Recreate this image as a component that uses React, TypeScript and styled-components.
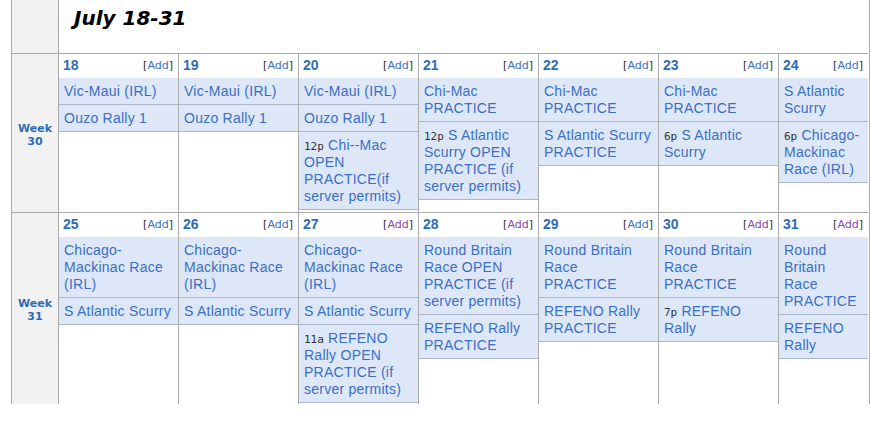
import { Fragment } from 'react';
import styled, { createGlobalStyle } from 'styled-components';

const GlobalStyle = createGlobalStyle`
  html, body {
    margin: 0;
    padding: 0;
    background: #ffffff;
    font-family: "Liberation Sans", Arial, sans-serif;
  }
`;

type Entry = string | { time: string; text: string };
type Day = { num: number; visited?: boolean; events: Entry[] };

const weeks: { label: number; days: Day[] }[] = [
  {
    label: 30,
    days: [
      { num: 18, events: ['Vic-Maui (IRL)', 'Ouzo Rally 1'] },
      { num: 19, events: ['Vic-Maui (IRL)', 'Ouzo Rally 1'] },
      {
        num: 20,
        events: ['Vic-Maui (IRL)', 'Ouzo Rally 1', { time: '12p', text: 'Chi--Mac OPEN PRACTICE(if server permits)' }],
      },
      {
        num: 21,
        events: ['Chi-Mac PRACTICE', { time: '12p', text: 'S Atlantic Scurry OPEN PRACTICE (if server permits)' }],
      },
      { num: 22, events: ['Chi-Mac PRACTICE', 'S Atlantic Scurry PRACTICE'] },
      { num: 23, events: ['Chi-Mac PRACTICE', { time: '6p', text: 'S Atlantic Scurry' }] },
      { num: 24, events: ['S Atlantic Scurry', { time: '6p', text: 'Chicago-Mackinac Race (IRL)' }] },
    ],
  },
  {
    label: 31,
    days: [
      { num: 25, events: ['Chicago-Mackinac Race (IRL)', 'S Atlantic Scurry'] },
      { num: 26, events: ['Chicago-Mackinac Race (IRL)', 'S Atlantic Scurry'] },
      {
        num: 27,
        visited: true,
        events: [
          'Chicago-Mackinac Race (IRL)',
          'S Atlantic Scurry',
          { time: '11a', text: 'REFENO Rally OPEN PRACTICE (if server permits)' },
        ],
      },
      {
        num: 28,
        visited: true,
        events: ['Round Britain Race OPEN PRACTICE (if server permits)', 'REFENO Rally PRACTICE'],
      },
      { num: 29, events: ['Round Britain Race PRACTICE', 'REFENO Rally PRACTICE'] },
      { num: 30, visited: true, events: ['Round Britain Race PRACTICE', { time: '7p', text: 'REFENO Rally' }] },
      { num: 31, visited: true, events: ['Round Britain Race PRACTICE', 'REFENO Rally'] },
    ],
  },
];

const Page = styled.div`
  padding-left: 11px;
  height: 404px;
  overflow: hidden;
`;

const Calendar = styled.div`
  display: grid;
  grid-template-columns: 47px repeat(6, 120px) 90px;
  width: 858px;
  border-right: 1px solid #aaaaaa;
`;

const SideCell = styled.div`
  background: #f2f2f2;
  border-left: 1px solid #aaaaaa;
`;

const TitleCell = styled.div`
  grid-column: 2 / -1;
  height: 53px;
  border-left: 1px solid #aaaaaa;
  background: #ffffff;
  padding: 6px 0 0 15px;
  box-sizing: border-box;
`;

const Title = styled.h2`
  margin: 0;
  font-family: "DejaVu Sans", Verdana, sans-serif;
  font-size: 20px;
  font-weight: bold;
  font-style: italic;
  color: #000000;
  line-height: 24px;
`;

const WeekCell = styled.div<{ $height: number }>`
  height: ${(p) => p.$height}px;
  background: #f2f2f2;
  border-left: 1px solid #aaaaaa;
  border-top: 1px solid #aaaaaa;
  display: flex;
  align-items: center;
  justify-content: center;
  text-align: center;
  padding-top: 3px;
  box-sizing: border-box;
  font-family: "DejaVu Sans", Verdana, sans-serif;
  font-size: 11px;
  font-weight: bold;
  line-height: 13px;
  color: #2d6cb5;
`;

const DayCell = styled.div`
  border-left: 1px solid #aaaaaa;
  border-top: 1px solid #aaaaaa;
  background: #ffffff;
  display: flex;
  flex-direction: column;
  min-width: 0;
`;

const DayHead = styled.div`
  height: 24px;
  display: flex;
  justify-content: space-between;
  align-items: flex-start;
  padding: 3px 5px 0 4px;
  box-sizing: border-box;
`;

const DayNum = styled.span`
  font-family: "Liberation Sans", Arial, sans-serif;
  font-size: 14px;
  font-weight: bold;
  line-height: 16px;
  color: #2d6cb5;
`;

const AddLink = styled.span<{ $visited?: boolean }>`
  font-family: "DejaVu Sans", Verdana, sans-serif;
  font-size: 11px;
  line-height: 18px;
  color: #333333;

  b {
    font-weight: normal;
    color: ${(p) => (p.$visited ? '#8a45a8' : '#3a6fbf')};
  }
`;

const Event = styled.div`
  background: #dde7f8;
  border-bottom: 1px solid #a9b5c8;
  padding: 5px 5px 4px 5px;
  font-size: 14px;
  line-height: 17px;
  letter-spacing: 0.25px;
  color: #3a6fc4;
`;

const Time = styled.span`
  font-family: "DejaVu Sans Mono", "Liberation Mono", monospace;
  font-size: 11px;
  line-height: 1;
  letter-spacing: 0;
  color: #333333;
`;

export default function App() {
  return (
    <Page>
      <GlobalStyle />
      <Calendar>
        <SideCell />
        <TitleCell>
          <Title>July 18-31</Title>
        </TitleCell>
        {weeks.map((week, i) => (
          <Fragment key={week.label}>
            <WeekCell $height={i === 0 ? 159 : 192}>
              Week
              <br />
              {week.label}
            </WeekCell>
            {week.days.map((day) => (
              <DayCell key={day.num}>
                <DayHead>
                  <DayNum>{day.num}</DayNum>
                  <AddLink $visited={day.visited}>
                    [<b>Add</b>]
                  </AddLink>
                </DayHead>
                {day.events.map((ev, j) =>
                  typeof ev === 'string' ? (
                    <Event key={j}>{ev}</Event>
                  ) : (
                    <Event key={j}>
                      <Time>{ev.time}</Time> {ev.text}
                    </Event>
                  )
                )}
              </DayCell>
            ))}
          </Fragment>
        ))}
      </Calendar>
    </Page>
  );
}
